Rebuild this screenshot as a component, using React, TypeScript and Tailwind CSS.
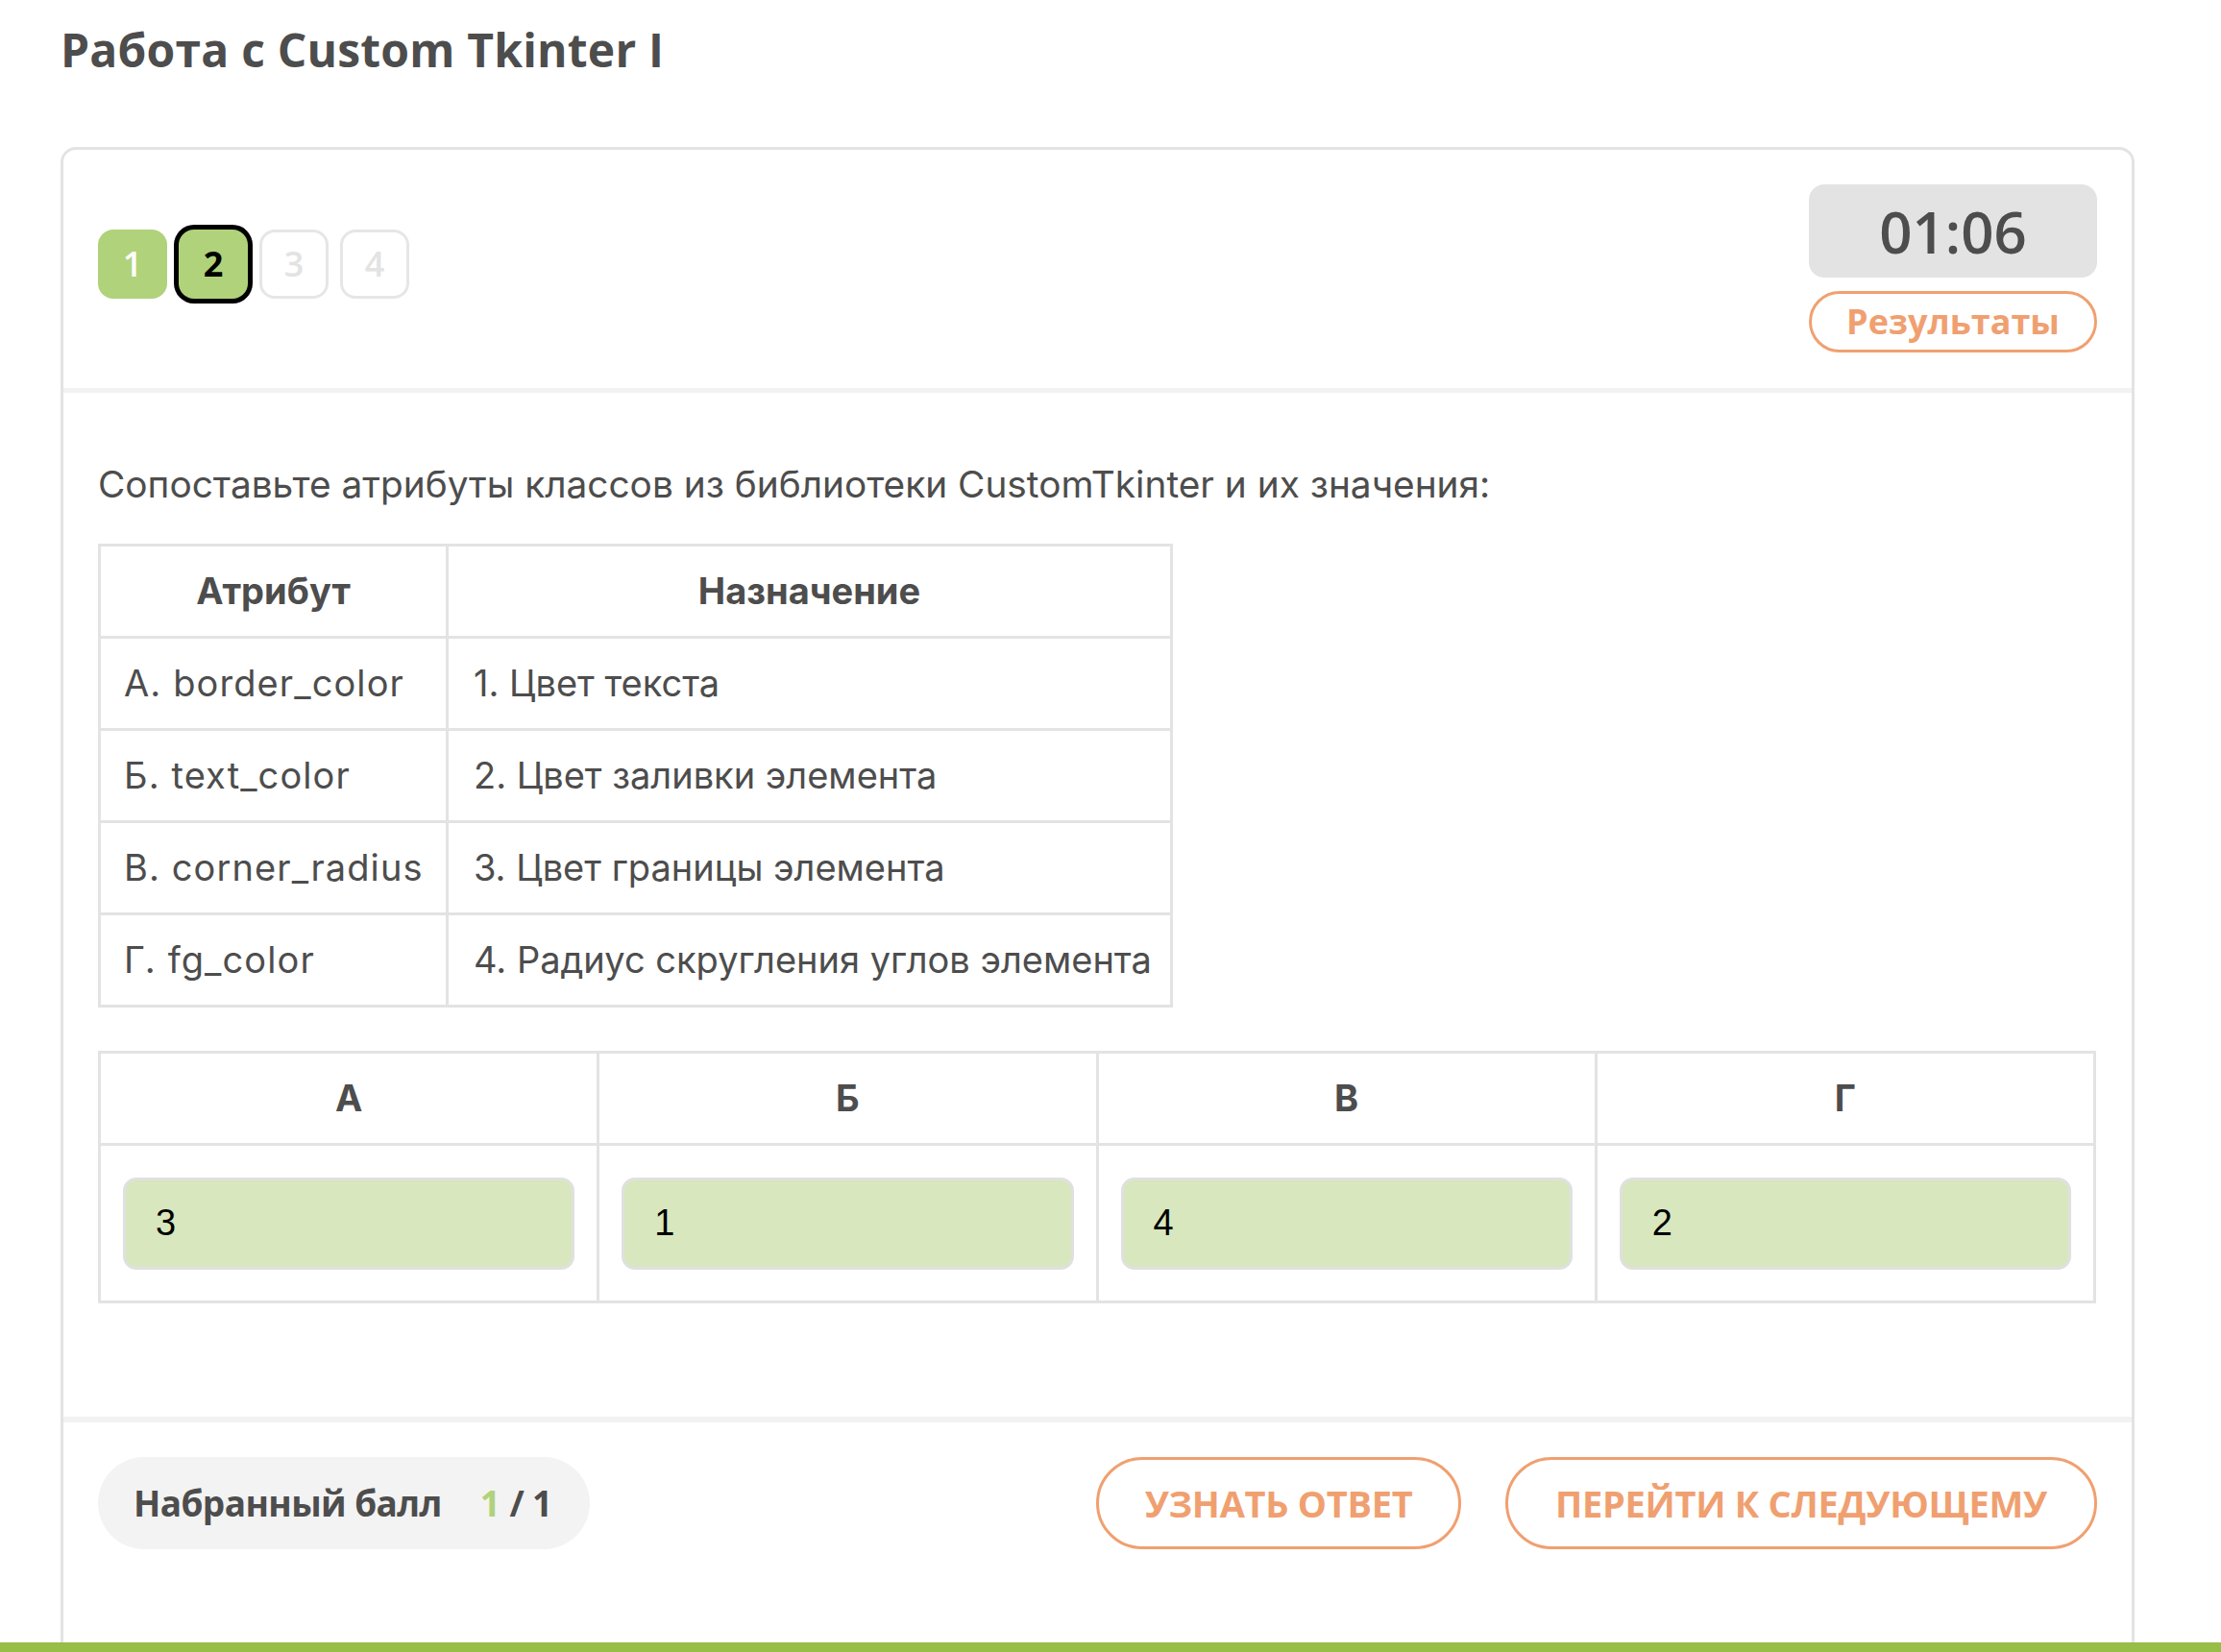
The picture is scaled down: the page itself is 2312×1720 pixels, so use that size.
import * as React from "react";

const heading = "font-['Open_Sans','Noto_Sans',sans-serif]";
const body = "font-['Inter','Noto_Sans',sans-serif]";

const attributes = [
  { attr: "А. border_color", value: "1. Цвет текста" },
  { attr: "Б. text_color", value: "2. Цвет заливки элемента" },
  { attr: "В. corner_radius", value: "3. Цвет границы элемента" },
  { attr: "Г. fg_color", value: "4. Радиус скругления углов элемента" },
];

const answers = [
  { letter: "А", value: "3" },
  { letter: "Б", value: "1" },
  { letter: "В", value: "4" },
  { letter: "Г", value: "2" },
];

const QuestionNav: React.FC = () => {
  return (
    <div className={"flex gap-[12px] mt-[47px] " + heading}>
      <div className="w-[72px] h-[72px] rounded-[16px] bg-[#b0d27a] text-white text-[36px] font-semibold flex items-center justify-center">
        1
      </div>
      <div className="w-[72px] h-[72px] rounded-[16px] bg-[#b0d27a] ring-[5px] ring-black text-black text-[36px] font-bold flex items-center justify-center">
        2
      </div>
      <div className="w-[72px] h-[72px] rounded-[16px] border-[3px] border-[#e6e6e6] text-[#e3e3e3] text-[36px] font-semibold flex items-center justify-center">
        3
      </div>
      <div className="w-[72px] h-[72px] rounded-[16px] border-[3px] border-[#e6e6e6] text-[#e3e3e3] text-[36px] font-semibold flex items-center justify-center">
        4
      </div>
    </div>
  );
};

const App: React.FC = () => {
  return (
    <div className="relative w-[2312px] h-[1720px] overflow-hidden bg-white text-[#4d4d4d]">
      <h1
        className={
          "pl-[63px] pt-[20px] h-[153px] text-[48px] leading-[64px] font-bold tracking-[0.2px] " +
          heading
        }
      >
        Работа с Custom Tkinter I
      </h1>

      <div className="ml-[63px] w-[2159px] border-[3px] border-[#e3e3e3] rounded-[16px]">
        {/* header: question numbers, timer */}
        <div className="flex justify-between px-[36px] pt-[36px] pb-[37px]">
          <QuestionNav />
          <div className={"flex flex-col gap-[14px] w-[300px] " + heading}>
            <div className="h-[97px] rounded-[16px] bg-[#e3e3e3] flex items-center justify-center text-[60px] font-semibold">
              01:06
            </div>
            <button className="h-[64px] rounded-full border-[3px] border-[#f0a070] text-[#f0a070] text-[36px] font-bold flex items-center justify-center">
              Результаты
            </button>
          </div>
        </div>
        <div className="h-[5px] bg-[#f2f2f2]" />

        {/* question */}
        <div className={"px-[36px] pt-[67px] pb-[118px] " + body}>
          <p className="text-[38.8px] leading-[56px] mb-[34px]">
            Сопоставьте атрибуты классов из библиотеки CustomTkinter и их
            значения:
          </p>

          <div className="w-[1119px] border-l-[3px] border-t-[3px] border-[#e3e3e3] grid grid-cols-[362px_754px] text-[38px]">
            <div className="h-[96px] border-r-[3px] border-b-[3px] border-[#e3e3e3] flex items-center justify-center font-bold">
              Атрибут
            </div>
            <div className="h-[96px] border-r-[3px] border-b-[3px] border-[#e3e3e3] flex items-center justify-center font-bold">
              Назначение
            </div>
            {attributes.map((row) => (
              <React.Fragment key={row.attr}>
                <div className="h-[96px] border-r-[3px] border-b-[3px] border-[#e3e3e3] flex items-center px-[24px] whitespace-nowrap tracking-[1.1px]">
                  {row.attr}
                </div>
                <div className="h-[96px] border-r-[3px] border-b-[3px] border-[#e3e3e3] flex items-center px-[26px] whitespace-nowrap">
                  {row.value}
                </div>
              </React.Fragment>
            ))}
          </div>

          <div className="mt-[45px] w-[2080px] border-l-[3px] border-t-[3px] border-[#e3e3e3] grid grid-cols-4 text-[38px]">
            {answers.map((a) => (
              <div
                key={"h" + a.letter}
                className="h-[96px] border-r-[3px] border-b-[3px] border-[#e3e3e3] flex items-center justify-center font-bold"
              >
                {a.letter}
              </div>
            ))}
            {answers.map((a) => (
              <div
                key={"v" + a.letter}
                className="h-[164px] border-r-[3px] border-b-[3px] border-[#e3e3e3] flex items-center px-[23px]"
              >
                <div className="w-full h-[96px] rounded-[14px] border-[3px] border-[#e0e0e0] bg-[#d8e7bd] flex items-center pl-[31px] text-black text-[38px] font-['Liberation_Sans',Arial,sans-serif]">
                  {a.value}
                </div>
              </div>
            ))}
          </div>
        </div>

        {/* footer: score and actions */}
        <div className="h-[6px] bg-[#f2f2f2]" />
        <div
          className={
            "flex items-center justify-between px-[36px] pt-[36px] pb-[200px] " +
            heading
          }
        >
          <div className="h-[96px] w-[512px] rounded-full bg-[#f3f3f3] flex items-center pl-[37px] text-[37px] font-bold whitespace-nowrap tracking-[-0.6px]">
            <span>Набранный балл</span>
            <span className="ml-[40px] text-[#b0d27a]">1</span>
            <span className="ml-[10px]">/ 1</span>
          </div>
          <div className="flex gap-[46px]">
            <button className="h-[96px] w-[380px] rounded-full border-[3px] border-[#f0a070] text-[#f0a070] text-[38px] font-bold tracking-[-0.3px] whitespace-nowrap">
              УЗНАТЬ ОТВЕТ
            </button>
            <button className="h-[96px] w-[616px] rounded-full border-[3px] border-[#f0a070] text-[#f0a070] text-[38px] font-bold tracking-[-0.3px] whitespace-nowrap">
              ПЕРЕЙТИ К СЛЕДУЮЩЕМУ
            </button>
          </div>
        </div>
      </div>

      <div className="fixed bottom-0 left-0 w-full h-[10px] bg-[#97be47]" />
    </div>
  );
};

export default App;
